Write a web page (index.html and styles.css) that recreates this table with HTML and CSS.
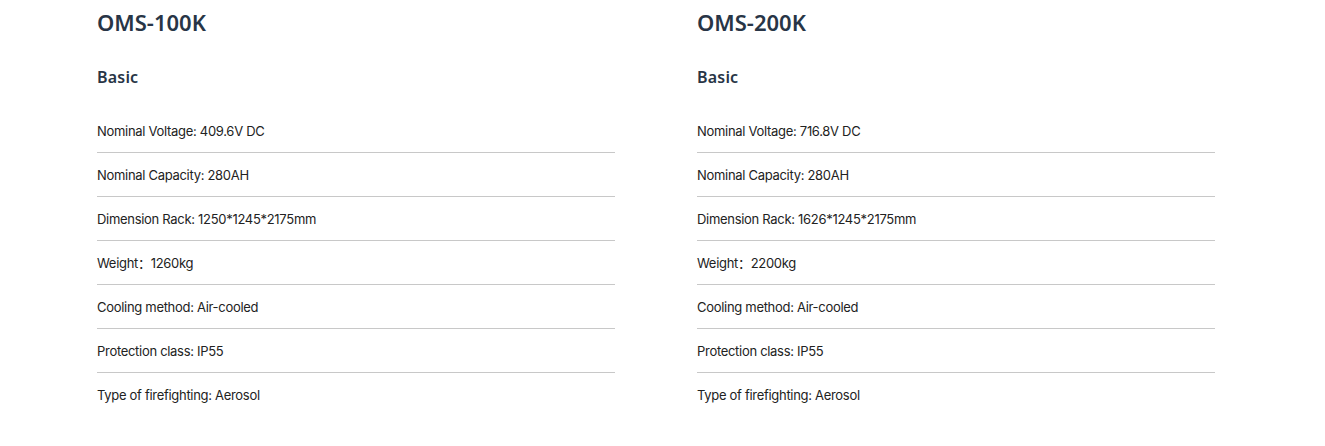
FILE: index.html
```html
<!DOCTYPE html>
<html lang="en">
<head>
<meta charset="utf-8">
<title>Specs</title>
<link rel="stylesheet" href="styles.css">
</head>
<body>
<div class="specs">
  <section class="model">
    <h2 class="model-title">OMS-100K</h2>
    <h3 class="group-title">Basic</h3>
    <ul class="spec-list">
      <li>Nominal Voltage: 409.6V DC</li>
      <li>Nominal Capacity: 280AH</li>
      <li>Dimension Rack: 1250*1245*2175mm</li>
      <li>Weight：1260kg</li>
      <li>Cooling method: Air-cooled</li>
      <li>Protection class: IP55</li>
      <li>Type of firefighting: Aerosol</li>
    </ul>
  </section>
  <section class="model">
    <h2 class="model-title">OMS-200K</h2>
    <h3 class="group-title">Basic</h3>
    <ul class="spec-list">
      <li>Nominal Voltage: 716.8V DC</li>
      <li>Nominal Capacity: 280AH</li>
      <li>Dimension Rack: 1626*1245*2175mm</li>
      <li>Weight：2200kg</li>
      <li>Cooling method: Air-cooled</li>
      <li>Protection class: IP55</li>
      <li>Type of firefighting: Aerosol</li>
    </ul>
  </section>
</div>
</body>
</html>
```
FILE: styles.css
```css
html, body {
  margin: 0;
  padding: 0;
  background: #ffffff;
}
.specs {
  display: flex;
  gap: 82px;
  padding: 7px 0 0 97px;
}
.model {
  width: 518px;
}
.model-title {
  margin: 0;
  font-family: "Noto Sans", "Liberation Sans", sans-serif;
  font-weight: 600;
  font-size: 22px;
  line-height: 30px;
  color: #283546;
  letter-spacing: 0;
}
.group-title {
  margin: 28px 0 0;
  font-family: "Noto Sans", "Liberation Sans", sans-serif;
  font-weight: 600;
  font-size: 16px;
  line-height: 24px;
  color: #283546;
  letter-spacing: 0.2px;
}
.spec-list {
  list-style: none;
  margin: 20px 0 0;
  padding: 0;
}
.spec-list li {
  font-family: Inter, "Noto Sans CJK SC", "Liberation Sans", sans-serif;
  font-size: 13px;
  line-height: 20px;
  letter-spacing: -0.3px;
  color: #222222;
  padding: 12px 0 11px;
  border-bottom: 1px solid #c8c8c8;
}
.spec-list li:last-child {
  border-bottom: none;
}
```
